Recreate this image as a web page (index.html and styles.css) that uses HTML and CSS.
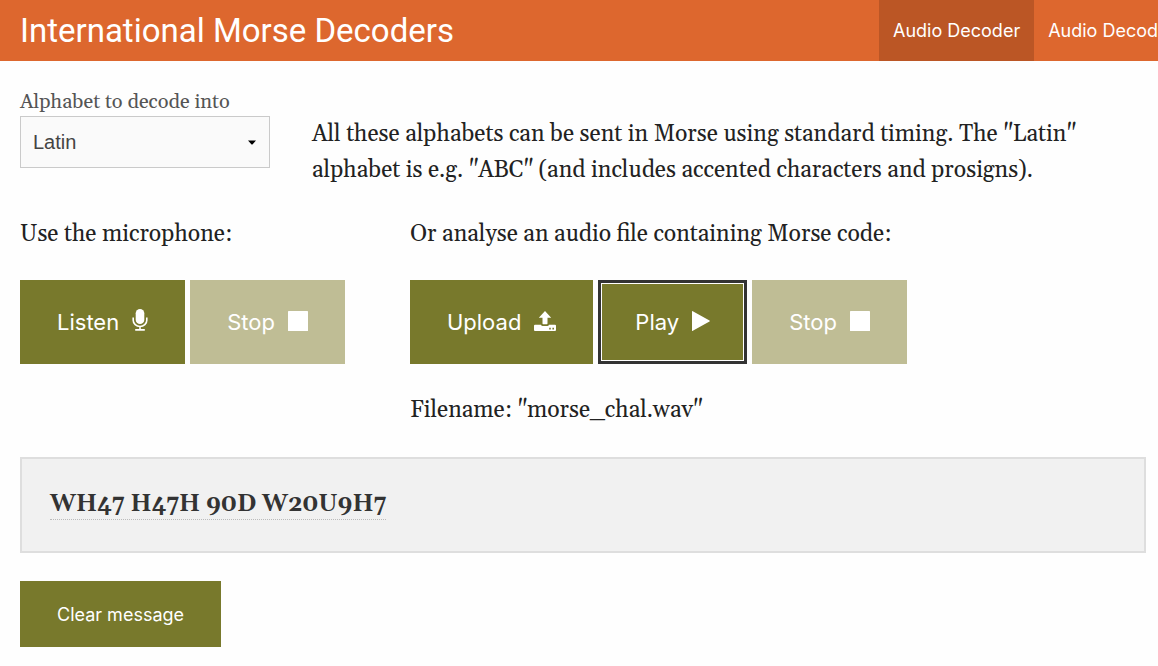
FILE: index.html
```html
<!DOCTYPE html>
<html lang="en">
<head>
<meta charset="utf-8">
<meta name="viewport" content="width=device-width, initial-scale=1">
<title>International Morse Decoders</title>
<link rel="stylesheet" href="styles.css">
</head>
<body>
<header class="topbar">
  <h1 class="topbar-title">International Morse Decoders</h1>
  <nav class="topbar-nav">
    <a class="nav-link nav-link-active" href="#decoder">Audio Decoder</a>
    <a class="nav-link" href="#expert">Audio Decoder Expert</a>
  </nav>
</header>
<main class="content">
  <section class="alphabet">
    <div class="field">
      <label class="field-label" for="alphabet">Alphabet to decode into</label>
      <div class="select-wrap">
        <select class="select" id="alphabet"><option>Latin</option></select>
        <svg class="select-arrow" viewBox="0 0 8 5" aria-hidden="true"><path d="M0 0.5H8L4.7 4.2Q4 5 3.3 4.2Z"/></svg>
      </div>
    </div>
    <p class="description">All these alphabets can be sent in Morse using standard timing. The "Latin" alphabet is e.g. "ABC" (and includes accented characters and prosigns).</p>
  </section>
  <section class="sources">
    <div class="source">
      <p class="text">Use the microphone:</p>
      <div class="buttons">
        <button class="button" type="button">Listen
          <svg class="icon icon-mic" viewBox="0 0 16 22" aria-hidden="true"><rect x="3.7" y="0" width="8.6" height="15" rx="4.3" fill="currentColor"/><path d="M1.2 8.5V11.2A6.8 6.3 0 0 0 14.8 11.2V8.5M8 17.5V21M3.2 20.9H12.8" fill="none" stroke="currentColor" stroke-width="1.6"/></svg>
        </button>
        <button class="button" type="button" disabled>Stop
          <svg class="icon icon-stop" viewBox="0 0 20 20" aria-hidden="true"><rect width="20" height="20" rx="0.6" fill="currentColor"/></svg>
        </button>
      </div>
    </div>
    <div class="source">
      <p class="text">Or analyse an audio file containing Morse code:</p>
      <div class="buttons">
        <button class="button" type="button">Upload
          <svg class="icon icon-upload" viewBox="0 0 22 20" aria-hidden="true"><path fill="currentColor" fill-rule="evenodd" d="M11 0L17.2 6.8H13.5V12.6Q13.5 13.3 12.8 13.3H9.2Q8.5 13.3 8.5 12.6V6.8H4.8ZM1 13.7H7Q7.3 15 8.8 15H13.2Q14.7 15 15 13.7H21Q22 13.7 22 14.7V19Q22 20 21 20H1Q0 20 0 19V14.7Q0 13.7 1 13.7ZM15.2 16.8V18.4H16.8V16.8ZM18.4 16.8V18.4H20V16.8Z"/></svg>
        </button>
        <button class="button button-focused" type="button">Play
          <svg class="icon icon-play" viewBox="0 0 18 20" aria-hidden="true"><path d="M0 0.6Q0 -0.3 0.8 0.2L17.5 9.5Q18.2 10 17.5 10.5L0.8 19.8Q0 20.3 0 19.4Z" fill="currentColor"/></svg>
        </button>
        <button class="button" type="button" disabled>Stop
          <svg class="icon icon-stop" viewBox="0 0 20 20" aria-hidden="true"><rect width="20" height="20" rx="0.6" fill="currentColor"/></svg>
        </button>
      </div>
      <p class="text">Filename: "morse_chal.wav"</p>
    </div>
  </section>
  <section class="message"><span class="message-text">WH47 H47H 90D W20U9H7</span></section>
  <button class="button button-small" type="button">Clear message</button>
</main>
</body>
</html>
```

FILE: styles.css
```css
* { box-sizing: border-box; }

body {
  margin: 0;
  background: #fefefe;
  color: #222;
  font: 23px/36px Gelasio, Georgia, "Liberation Serif", serif;
}

p { margin: 0; }

.topbar {
  display: flex;
  overflow: hidden;
  background: #dd672e;
  color: #fff;
  font-family: Inter, "Liberation Sans", sans-serif;
}

.topbar-title {
  flex: 1;
  margin: 0;
  padding: 0 20px;
  font-family: Roboto, "Liberation Sans", sans-serif;
  font-size: 33px;
  font-weight: 400;
  line-height: 61px;
  white-space: nowrap;
}

.topbar-nav {
  display: flex;
  flex: 0 0 279px;
  min-width: 0;
}

.nav-link {
  flex: none;
  padding: 0 14px;
  color: #fff;
  font-size: 18px;
  line-height: 61px;
  text-decoration: none;
  white-space: nowrap;
}

.nav-link-active { background: #bb5625; }

.content { padding: 28px 12px 18px 20px; }

.alphabet {
  display: grid;
  grid-template-columns: 250px minmax(0, 780px);
  gap: 42px;
}

.field-label {
  display: block;
  color: #555;
  font-size: 20px;
  line-height: 27px;
}

.select-wrap { position: relative; }

.select {
  display: block;
  width: 100%;
  height: 52px;
  padding: 0 12px;
  border: 1px solid #cacaca;
  border-radius: 0;
  background: #fafafa;
  color: #444;
  font: 20px "Liberation Sans", sans-serif;
  appearance: none;
}

.select-arrow {
  position: absolute;
  top: 24px;
  right: 14px;
  width: 8px;
  height: 5px;
  pointer-events: none;
}

.description { padding-top: 28px; }

.sources {
  display: flex;
  gap: 65px;
  padding-top: 28px;
}

.buttons {
  display: flex;
  gap: 5px;
  padding: 27px 0 29px;
}

.button {
  display: flex;
  align-items: center;
  gap: 13px;
  height: 84px;
  padding: 0 37px;
  border: 0;
  background: #78792c;
  color: #fff;
  font: 22px Inter, "Liberation Sans", sans-serif;
}

.button:disabled { background: #bfbd95; }

.button-focused {
  outline: 3px solid #333;
  outline-offset: -3px;
  box-shadow: inset 0 0 0 4px #fff;
}

.button-small {
  height: 66px;
  font-size: 18px;
}

.icon { display: block; }
.icon-mic { width: 16px; height: 22px; margin-bottom: 4px; }
.icon-stop { width: 20px; height: 20px; margin-bottom: 3px; }
.icon-upload { width: 22px; height: 20px; margin-bottom: 3px; }
.icon-play { width: 18px; height: 20px; margin-bottom: 3px; }

.message {
  margin: 28px 0;
  padding: 28px;
  border: 2px solid #dedede;
  background: #f1f1f1;
  color: #333;
  font-weight: 700;
}

.message-text { border-bottom: 1px dotted #bbb; }
```
